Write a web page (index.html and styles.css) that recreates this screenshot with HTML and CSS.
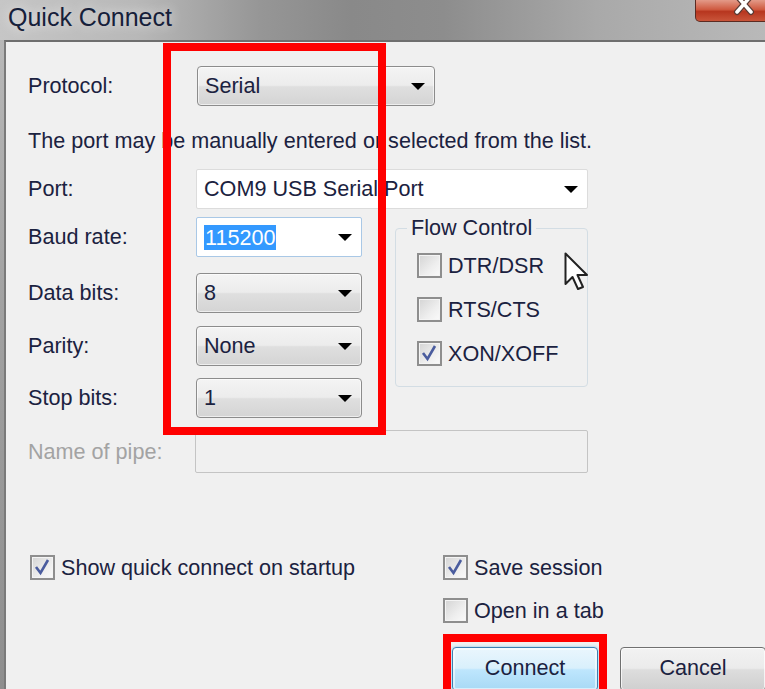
FILE: index.html
```html
<!DOCTYPE html>
<html lang="en">
<head>
    <meta charset="UTF-8">
    <meta name="viewport" content="width=device-width, initial-scale=1.0">
    <title>Quick Connect</title>
    <link rel="stylesheet" href="styles.css">
</head>
<body>
    <div class="screen">
        <div class="titlebar">
            <span class="title">Quick Connect</span>
            <span class="close-btn">
                <svg width="22" height="16" viewBox="0 0 22 16">
                    <path d="M4 -4 L18 12 M18 -4 L4 12" stroke="#5a3a34" stroke-width="6" stroke-linecap="round"/>
                    <path d="M4 -4 L18 12 M18 -4 L4 12" stroke="#ffffff" stroke-width="3.5" stroke-linecap="round"/>
                </svg>
            </span>
        </div>

        <div class="window">
            <div class="frame"></div>
            <div class="client">
                <div class="row row-protocol">
                    <span class="label">Protocol:</span>
                    <div class="select select-protocol"><span>Serial</span><span class="arrow"></span></div>
                </div>

                <p class="hint">The port may be manually entered or selected from the list.</p>

                <div class="row row-port">
                    <span class="label">Port:</span>
                    <div class="combo combo-port"><span>COM9 USB Serial Port</span><span class="arrow"></span></div>
                </div>

                <div class="middle">
                    <div class="fields">
                        <div class="row">
                            <span class="label">Baud rate:</span>
                            <div class="combo combo-baud"><span class="selected-text">115200</span><span class="arrow"></span></div>
                        </div>
                        <div class="row row-data">
                            <span class="label">Data bits:</span>
                            <div class="select select-small"><span>8</span><span class="arrow"></span></div>
                        </div>
                        <div class="row row-parity">
                            <span class="label">Parity:</span>
                            <div class="select select-small"><span>None</span><span class="arrow"></span></div>
                        </div>
                        <div class="row row-stop">
                            <span class="label">Stop bits:</span>
                            <div class="select select-small"><span>1</span><span class="arrow"></span></div>
                        </div>
                    </div>

                    <fieldset class="flow">
                        <legend>Flow Control</legend>
                        <div class="flow-list">
                            <div class="check"><span class="box"></span>DTR/DSR</div>
                            <div class="check"><span class="box"></span>RTS/CTS</div>
                            <div class="check"><span class="box"><svg width="21" height="21" viewBox="0 0 21 21"><path d="M4 10 L8.5 16 L16 3" fill="none" stroke="#4a5c9e" stroke-width="2.6"/></svg></span>XON/XOFF</div>
                        </div>
                    </fieldset>
                </div>

                <div class="row row-pipe">
                    <span class="label label-disabled">Name of pipe:</span>
                    <div class="pipe-input"></div>
                </div>

                <div class="bottom">
                    <div class="bottom-left">
                        <div class="check"><span class="box"><svg width="21" height="21" viewBox="0 0 21 21"><path d="M4 10 L8.5 16 L16 3" fill="none" stroke="#4a5c9e" stroke-width="2.6"/></svg></span>Show quick connect on startup</div>
                    </div>
                    <div class="bottom-right">
                        <div class="check"><span class="box"><svg width="21" height="21" viewBox="0 0 21 21"><path d="M4 10 L8.5 16 L16 3" fill="none" stroke="#4a5c9e" stroke-width="2.6"/></svg></span>Save session</div>
                        <div class="check check-tab"><span class="box"></span>Open in a tab</div>
                        <div class="buttons">
                            <button class="btn btn-connect">Connect</button>
                            <button class="btn btn-cancel">Cancel</button>
                        </div>
                    </div>
                </div>
            </div>
        </div>

        <!-- red annotation boxes and mouse pointer -->
        <div class="mark mark-fields"></div>
        <div class="mark mark-connect"></div>
        <svg class="cursor" width="26" height="40" viewBox="0 0 26 40">
            <path d="M1.5 1.5 L1.5 32 L8.5 25 L14 37 L19 35 L13.5 23 L23 23 Z" fill="#ffffff" stroke="#222" stroke-width="2" stroke-linejoin="round"/>
        </svg>
    </div>
</body>
</html>
```

FILE: styles.css
```css
body {
    margin: 0;
    background-color: #f0f0f0;
    font-family: "Liberation Sans", Arial, sans-serif;
    font-size: 21.6px;
    color: #1b2240;
}
.screen {
    position: relative;
    width: 765px;
    height: 689px;
    overflow: hidden;
}
.titlebar {
    height: 40px;
    display: flex;
    justify-content: space-between;
    align-items: flex-start;
    overflow: hidden;
    background: linear-gradient(to right, #c6c6c6 0%, #b8b8b8 18%, #969696 34%, #898989 46%, #8d8d8d 58%, #a9a9a9 78%, #b9b9b9 100%);
}
.title {
    margin-left: 8px;
    font-size: 25px;
    line-height: 34px;
    color: #16203a;
    text-shadow: 0 0 12px rgba(255, 255, 255, 0.8);
}
.close-btn {
    width: 80px;
    height: 22px;
    margin-right: -10px;
    box-sizing: border-box;
    border: 1px solid #5b2b22;
    border-top: none;
    border-radius: 0 0 0 5px;
    background: linear-gradient(#e39a88, #cf5a40 45%, #b7361f 55%, #c9553a);
    padding-left: 37px;
}
.close-btn svg {
    display: block;
}
.window {
    display: flex;
    height: 649px;
}
.frame {
    width: 4px;
    flex-shrink: 0;
    background: linear-gradient(#b8b8b8, #a2a2a2 40%, #8e8e8e);
}
.client {
    flex: 1;
    border-top: 2px solid #6e6e6e;
    border-left: 2px solid #7a7a7a;
    padding-left: 22px;
}
.row {
    display: flex;
    align-items: center;
    height: 40px;
}
.label {
    width: 168px;
    flex-shrink: 0;
}
.label-disabled {
    color: #a3a3a3;
}
.row-protocol {
    margin-top: 24px;
}
.hint {
    margin: 22px 0 0;
    line-height: 26px;
}
.row-port {
    margin-top: 15px;
}
.select, .combo {
    height: 40px;
    box-sizing: border-box;
    display: flex;
    align-items: center;
    justify-content: space-between;
    padding: 0 9px 0 7px;
}
.select {
    border: 1px solid #8c8c8c;
    border-radius: 4px;
    background: linear-gradient(#f4f4f4, #ececec 48%, #dfdfdf 52%, #d4d4d4);
    box-shadow: inset 0 0 0 1px rgba(255, 255, 255, 0.6);
}
.select-protocol {
    width: 238px;
    margin-left: 1px;
    padding-left: 7px;
}
.select-small {
    width: 166px;
}
.combo {
    background-color: #ffffff;
    border: 1px solid #dcdcdc;
    border-radius: 2px;
}
.combo-port {
    width: 392px;
}
.combo-baud {
    width: 166px;
    border-color: #a9c8e6;
}
.selected-text {
    background-color: #3399ff;
    color: #ffffff;
    line-height: 25px;
    padding: 0 1px;
}
.arrow {
    width: 0;
    height: 0;
    border-left: 7px solid transparent;
    border-right: 7px solid transparent;
    border-top: 7px solid #000000;
}
.middle {
    display: flex;
    align-items: flex-start;
    margin-top: 8px;
}
.fields {
    width: 334px;
}
.row-data {
    margin-top: 16px;
}
.row-parity {
    margin-top: 13px;
}
.row-stop {
    margin-top: 12px;
}
.flow {
    margin: 0 0 0 33px;
    padding: 0;
    width: 193px;
    box-sizing: border-box;
    border: 1px solid #d3dde4;
    border-radius: 4px;
    min-width: 0;
}
.flow legend {
    margin-left: 11px;
    padding: 0 4px;
    line-height: 22px;
}
.flow-list {
    padding: 14px 0 20px 21px;
    display: flex;
    flex-direction: column;
    gap: 19px;
}
.check {
    display: flex;
    align-items: center;
    gap: 6px;
    height: 25px;
    white-space: nowrap;
}
.box {
    width: 25px;
    height: 25px;
    box-sizing: border-box;
    flex-shrink: 0;
    border: 2px solid #8e8e8e;
    background: linear-gradient(135deg, #d4d4d4, #eeeeee 60%, #fafafa);
    box-shadow: inset 0 0 0 1px #f4f4f4;
}
.box svg {
    display: block;
}
.row-pipe {
    margin-top: 12px;
    height: 43px;
}
.pipe-input {
    width: 393px;
    height: 43px;
    margin-left: -1px;
    box-sizing: border-box;
    border: 1px solid #c4c4c4;
    border-radius: 2px;
}
.bottom {
    display: flex;
    margin-top: 82px;
}
.bottom-left {
    width: 415px;
    padding-left: 2px;
    box-sizing: border-box;
}
.check-tab {
    margin-top: 18px;
}
.buttons {
    display: flex;
    gap: 22px;
    margin-top: 24px;
    padding-left: 9px;
}
.btn {
    width: 146px;
    height: 44px;
    font: inherit;
    color: #1b2240;
    border-radius: 4px;
    padding: 0 0 2px;
}
.btn-connect {
    border: 1px solid #3c7fb1;
    background: linear-gradient(#eaf6fd, #d9f0fc 48%, #bee6fd 52%, #a7d9f5);
    box-shadow: inset 0 0 0 2px rgba(255, 255, 255, 0.55), 0 0 3px #7cc4ef;
}
.btn-cancel {
    border: 1px solid #707070;
    background: linear-gradient(#f2f2f2, #ebebeb 48%, #dddddd 52%, #cfcfcf);
    box-shadow: inset 0 0 0 1px rgba(255, 255, 255, 0.7);
}
.mark {
    position: absolute;
    border: 8px solid #ff0000;
    box-sizing: border-box;
}
.mark-fields {
    left: 163px;
    top: 43px;
    width: 223px;
    height: 392px;
}
.mark-connect {
    left: 443px;
    top: 634px;
    width: 164px;
    height: 80px;
}
.cursor {
    position: absolute;
    left: 564px;
    top: 252px;
}
```
